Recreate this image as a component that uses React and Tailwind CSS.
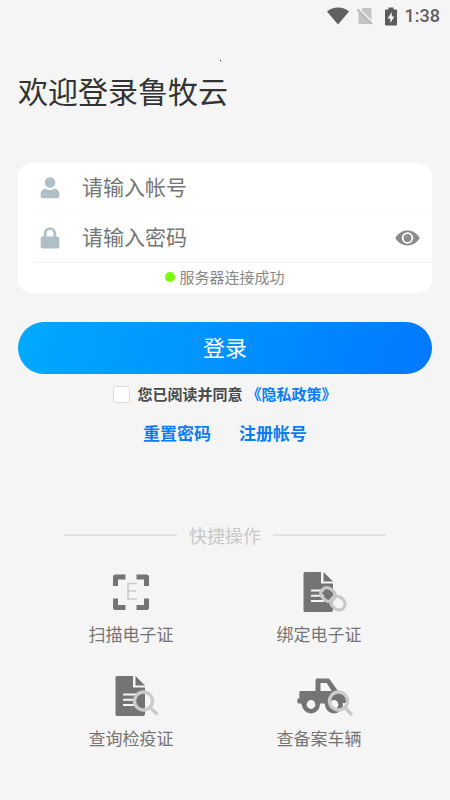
import { useState } from "react";

function StatusBar() {
  return (
    <header className="relative flex h-8 items-center justify-end pr-[10px] text-[#606060]">
      <svg className="mr-2 h-[18px] w-[22px]" viewBox="0 0 22 18" fill="currentColor" aria-hidden="true">
        <path d="M0 4.600C3 2 6.800.6 11 .6s8 1.400 11 4L11 17.400Z" />
      </svg>
      <svg className="mr-3 h-[18px] w-[16px]" viewBox="0 0 16 18" aria-hidden="true">
        <path d="M6 1h7a1.500 1.500 0 0 1 1.500 1.500v13A1.500 1.500 0 0 1 13 17H3a1.500 1.500 0 0 1-1.500-1.500V5.500Z" fill="#c4c4c4" />
        <path d="M1.500 1.500 16 16" stroke="#f5f5f5" strokeWidth="1.800" />
        <path d="M.5 2.500 15 17" stroke="#b8b8b8" strokeWidth="1.800" />
      </svg>
      <svg className="mr-2 h-[19px] w-[12px]" viewBox="0 0 12 19" aria-hidden="true">
        <path d="M3.500.5h5v2H11a1 1 0 0 1 1 1v14a1 1 0 0 1-1 1H1a1 1 0 0 1-1-1v-14a1 1 0 0 1 1-1h2.500Z" fill="#5c5c5c" />
        <path d="M6.800 5 2.600 11.400h2.700V16l4.100-6.600H6.800Z" fill="#f6f6f6" />
      </svg>
      <time className="font-[Roboto,sans-serif] text-[18px] leading-6 font-medium">1:38</time>
      <span className="absolute top-[60px] left-[220px] h-px w-px bg-black" aria-hidden="true" />
    </header>
  );
}

function UserIcon() {
  return (
    <svg className="h-[22px] w-5 shrink-0" viewBox="0 0 20 22" fill="#b0bec5" aria-hidden="true">
      <circle cx="10" cy="5.600" r="5.300" />
      <path d="M.7 19.500V17c0-3.200 2.300-5.200 5.300-5.200 1.300.8 2.600 1.200 4 1.200s2.700-.4 4-1.200c3 0 5.300 2 5.300 5.200v2.500c0 1.100-.8 1.700-1.800 1.700h-15c-1 0-1.800-.6-1.800-1.700Z" />
    </svg>
  );
}

function LockIcon() {
  return (
    <svg className="h-[22px] w-5 shrink-0" viewBox="0 0 20 22" aria-hidden="true">
      <path d="M5.100 11V6.600a4.900 4.900 0 0 1 9.800 0V11" fill="none" stroke="#b0bec5" strokeWidth="2.800" />
      <rect x=".7" y="9.500" width="18.600" height="12" rx="1.800" fill="#b0bec5" />
    </svg>
  );
}

function EyeIcon() {
  return (
    <svg className="h-4 w-[25px]" viewBox="0 0 25 16" aria-hidden="true">
      <path d="M.3 8C3 3.200 7.500.6 12.500.6S22 3.200 24.700 8C22 12.800 17.500 15.400 12.500 15.400S3 12.800.3 8Z" fill="#8c8c8c" />
      <circle cx="12.500" cy="8" r="4.800" fill="#8c8c8c" stroke="#fff" strokeWidth="1.800" />
      <circle cx="11.500" cy="6.800" r="1" fill="#a5a5a5" />
    </svg>
  );
}

function ScanIcon() {
  return (
    <svg className="h-11 w-14" viewBox="0 0 56 44" fill="none" aria-hidden="true">
      <path
        d="M12.500 16V7h10M33.500 7h10v9M12.500 28.500v9h10M33.500 37.500h10v-9"
        stroke="#757575" strokeWidth="5" strokeLinejoin="round"
      />
      <path d="M34 13.500h-9v15.500h9M25 21H33" stroke="#cacaca" strokeWidth="1.600" />
    </svg>
  );
}

function Sheet() {
  return (
    <>
      <path d="M13 2h16v11.500h12V40a2 2 0 0 1-2 2H13a1.500 1.500 0 0 1-1.500-1.500v-37A1.500 1.500 0 0 1 13 2Z" fill="#747474" />
      <path d="M31.500 2 41 11.500h-9.500Z" fill="#747474" />
      <path d="M19 20.500h13M19 25.700h13M19 31h13" stroke="#f5f5f5" strokeWidth="2" />
    </>
  );
}

function BindIcon() {
  return (
    <svg className="h-11 w-14" viewBox="-1 0 56 44" fill="none" aria-hidden="true">
      <Sheet />
      <g stroke="#c9c9c9" strokeWidth="3.200">
        <rect x="28.500" y="18.500" width="15" height="12" rx="6" transform="rotate(38 36 24.500)" />
        <rect x="38.500" y="27" width="15" height="12" rx="6" transform="rotate(38 46 33)" />
      </g>
    </svg>
  );
}

function QueryIcon() {
  return (
    <svg className="h-11 w-14" viewBox="-1 0 56 44" fill="none" aria-hidden="true">
      <Sheet />
      <circle cx="39.500" cy="27" r="9" stroke="#cbcbcb" strokeWidth="3.400" />
      <path d="m46 33.500 7.500 7" stroke="#cbcbcb" strokeWidth="3.600" />
    </svg>
  );
}

function TruckIcon() {
  return (
    <svg className="h-11 w-[68px]" viewBox="-9 0 68 44" fill="none" aria-hidden="true">
      <path
        d="M21.500 17V6a1.500 1.500 0 0 1 1.500-1.500h10.500c1 0 1.800.4 2.500 1.300L44 17l5 1.500c2 .7 3 2 3 4V29h-4a9 9 0 0 1-17.500.5h-6.500a9 9 0 0 1-17 0H5c-1.200 0-1.600-.8-1.600-1.800V25l2-1v-5.500c0-1 .6-1.500 1.600-1.500Z"
        fill="#747474"
      />
      <path d="M26.500 9h6.200l5 8H26.500Z" fill="#f5f5f5" />
      <circle cx="17" cy="30.500" r="9" fill="#747474" />
      <circle cx="17" cy="30.500" r="4.400" fill="#f5f5f5" />
      <circle cx="40" cy="30.500" r="9" fill="#747474" />
      <circle cx="40" cy="30.500" r="4.400" fill="#f5f5f5" />
      <circle cx="44.500" cy="27" r="9" stroke="#cbcbcb" strokeWidth="3.400" />
      <path d="m51 33.500 7 7.500" stroke="#cbcbcb" strokeWidth="3.600" />
    </svg>
  );
}

const shortcuts = [
  { label: "扫描电子证", Icon: ScanIcon },
  { label: "绑定电子证", Icon: BindIcon },
  { label: "查询检疫证", Icon: QueryIcon },
  { label: "查备案车辆", Icon: TruckIcon },
];

export default function App() {
  const [visible, setVisible] = useState(false);
  const [agreed, setAgreed] = useState(false);

  return (
    <div className="min-h-screen bg-[#f5f5f5] font-['Noto_Sans_CJK_SC',sans-serif] text-[#333]">
      <StatusBar />
      <main className="px-[18px] pt-[38px]">
        <h1 className="text-[30px] leading-10 font-normal">欢迎登录鲁牧云</h1>

        <form onSubmit={(e) => e.preventDefault()}>
          <section className="mt-[53px] rounded-[14px] bg-white">
            <div className="flex h-[49px] items-center pr-3 pl-[22px]">
              <UserIcon />
              <input
                type="text"
                aria-label="帐号"
                placeholder="请输入帐号"
                className="ml-[22px] min-w-0 flex-1 bg-transparent pb-1 text-[21px] leading-8 outline-none placeholder:text-[#757575]"
              />
            </div>
            <div className="ml-4 flex h-[51px] items-center border-t border-b border-t-[#fbfbfb] border-b-[#f1f1f1] pr-3 pl-[6px]">
              <LockIcon />
              <input
                type={visible ? "text" : "password"}
                aria-label="密码"
                placeholder="请输入密码"
                className="ml-[22px] min-w-0 flex-1 bg-transparent pb-1 text-[21px] leading-8 outline-none placeholder:text-[#757575]"
              />
              <button type="button" aria-label="显示密码" onClick={() => setVisible(!visible)}>
                <EyeIcon />
              </button>
            </div>
            <p className="flex h-[30px] items-center justify-center gap-1 pb-[2px] text-[15px] leading-5 text-[#888]">
              <span className="size-[10px] rounded-full bg-[#7cfc00]" />
              服务器连接成功
            </p>
          </section>

          <button
            type="submit"
            className="mt-[29px] h-[52px] w-full rounded-full bg-linear-100 from-[#00a9ff] to-[#0078ff] pb-1 text-[22px] text-white"
          >
            登录
          </button>

          <div className="mt-[10px] flex items-center justify-center text-[15px] leading-5 font-bold">
            <input
              id="agree"
              type="checkbox"
              checked={agreed}
              onChange={(e) => setAgreed(e.target.checked)}
              className="mr-[7px] size-[17px] appearance-none rounded-[3px] border border-[#dcdcdc] bg-white checked:bg-[#0a7cf5]"
            />
            <label htmlFor="agree" className="text-[#4a4a4a]">您已阅读并同意</label>
            <a href="#privacy" className="ml-1 text-[#0a7cf5]">《隐私政策》</a>
          </div>
        </form>

        <nav className="mt-[17px] flex justify-center gap-7 text-[17px] leading-6 font-bold text-[#0a7cf5]">
          <a href="#reset">重置密码</a>
          <a href="#register">注册帐号</a>
        </nav>

        <section className="mt-[78px]">
          <div className="mx-[46px] flex items-center gap-3">
            <span className="h-[2px] flex-1 bg-[#e2e2e2]" />
            <h2 className="text-[18px] leading-6 font-normal text-[#c8c8c8]">快捷操作</h2>
            <span className="h-[2px] flex-1 bg-[#e2e2e2]" />
          </div>
          <div className="mx-[19px] mt-[23px] grid grid-cols-2 gap-y-7">
            {shortcuts.map(({ label, Icon }) => (
              <button key={label} type="button" className="flex flex-col items-center gap-2 text-[17px] leading-6 text-[#757575]">
                <Icon />
                {label}
              </button>
            ))}
          </div>
        </section>
      </main>
    </div>
  );
}
